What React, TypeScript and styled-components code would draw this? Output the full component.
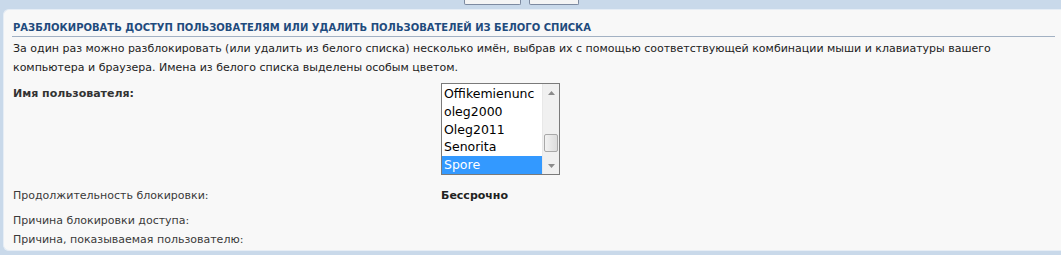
import React from "react";
import styled, { createGlobalStyle } from "styled-components";

const GlobalStyle = createGlobalStyle`
  html, body {
    margin: 0;
    padding: 0;
    background: #c9d9ea;
    overflow: hidden;
  }
  body {
    font-family: "DejaVu Sans", Verdana, sans-serif;
  }
`;

const Page = styled.div`
  width: 1061px;
  height: 255px;
  display: flex;
  flex-direction: column;
`;

const TopBar = styled.div`
  height: 9px;
  display: flex;
  justify-content: flex-start;
  align-items: flex-end;
  gap: 8px;
  padding-left: 464px;
  box-sizing: border-box;
`;

const TopButton = styled.div<{ w: number }>`
  width: ${(p) => p.w}px;
  height: 14px;
  margin-bottom: 4px;
  background: #f4f4f4;
  border: 1px solid #7d8aa0;
  border-top: none;
  border-radius: 0 0 2px 2px;
`;

const Panel = styled.div`
  margin-left: 3px;
  height: 242px;
  background: #f8f8f8;
  border-radius: 6px 0 0 6px;
  border: 1px solid #e6edf5;
  border-right: none;
  box-sizing: border-box;
  padding: 11px 6px 0 8px;
  display: flex;
  flex-direction: column;
`;

const Title = styled.h2`
  margin: 0;
  padding: 0 0 2px 1px;
  font-size: 10px;
  line-height: 13px;
  font-weight: bold;
  color: #1f4b7d;
  border-bottom: 1px solid #a2b1c3;
`;

const Description = styled.p`
  margin: 2px 0 0 1px;
  font-size: 11px;
  line-height: 19px;
  color: #222;
`;

const Row = styled.div<{ top: number }>`
  display: grid;
  grid-template-columns: 428px 1fr;
  margin-top: ${(p) => p.top}px;
  padding-left: 1px;
  font-size: 11px;
  line-height: 14px;
  color: #333;
`;

const Label = styled.div<{ strong?: boolean }>`
  font-weight: ${(p) => (p.strong ? "bold" : "normal")};
  color: ${(p) => (p.strong ? "#333" : "#3a3a3a")};
`;

const Value = styled.div`
  font-weight: bold;
  color: #222;
`;

const ListBox = styled.div`
  width: 119px;
  height: 92px;
  border: 1px solid #7a7a7a;
  background: #fff;
  display: flex;
  box-sizing: border-box;
  margin-top: -4px;
`;

const Options = styled.div`
  flex: 1;
  display: flex;
  flex-direction: column;
  padding-top: 1px;
`;

const Option = styled.div<{ selected?: boolean }>`
  height: 18px;
  line-height: 18px;
  padding-left: 2px;
  font-family: "DejaVu Sans", Tahoma, sans-serif;
  font-size: 12.5px;
  color: ${(p) => (p.selected ? "#fff" : "#000")};
  background: ${(p) => (p.selected ? "#3399ff" : "transparent")};
  white-space: nowrap;
  overflow: hidden;
`;

const ScrollBar = styled.div`
  width: 16px;
  background: #f0f0f0;
  border-left: 1px solid #e8e8e8;
  display: flex;
  flex-direction: column;
  align-items: center;
`;

const Arrow = styled.div`
  height: 17px;
  display: flex;
  align-items: center;
  justify-content: center;
`;

const Track = styled.div`
  flex: 1;
  width: 100%;
  display: flex;
  flex-direction: column;
  justify-content: flex-end;
  padding-bottom: 5px;
  box-sizing: border-box;
`;

const Thumb = styled.div`
  height: 16px;
  margin: 0 1px;
  border: 1px solid #a8a8a8;
  border-radius: 2px;
  background: linear-gradient(to right, #f2f2f2, #dcdcdc);
`;

const ArrowIcon = ({ up }: { up?: boolean }) => (
  <svg width="7" height="4" viewBox="0 0 7 4">
    <path d={up ? "M0 4 L3.5 0 L7 4 Z" : "M0 0 L3.5 4 L7 0 Z"} fill="#8a8a8a" />
  </svg>
);

const users = ["Offikemienunc", "oleg2000", "Oleg2011", "Senorita", "Spore"];

export default function App() {
  return (
    <Page>
      <GlobalStyle />
      <TopBar>
        <TopButton w={55} />
        <TopButton w={48} />
      </TopBar>
      <Panel>
        <Title>РАЗБЛОКИРОВАТЬ ДОСТУП ПОЛЬЗОВАТЕЛЯМ ИЛИ УДАЛИТЬ ПОЛЬЗОВАТЕЛЕЙ ИЗ БЕЛОГО СПИСКА</Title>
        <Description>
          За один раз можно разблокировать (или удалить из белого списка) несколько имён, выбрав их с помощью
          соответствующей комбинации мыши и клавиатуры вашего компьютера и браузера. Имена из белого списка
          выделены особым цветом.
        </Description>
        <Row top={10}>
          <Label strong>Имя пользователя:</Label>
          <ListBox>
            <Options>
              {users.map((u) => (
                <Option key={u} selected={u === "Spore"}>
                  {u}
                </Option>
              ))}
            </Options>
            <ScrollBar>
              <Arrow>
                <ArrowIcon up />
              </Arrow>
              <Track>
                <Thumb />
              </Track>
              <Arrow>
                <ArrowIcon />
              </Arrow>
            </ScrollBar>
          </ListBox>
        </Row>
        <Row top={14}>
          <Label>Продолжительность блокировки:</Label>
          <Value>Бессрочно</Value>
        </Row>
        <Row top={11}>
          <Label>Причина блокировки доступа:</Label>
        </Row>
        <Row top={5}>
          <Label>Причина, показываемая пользователю:</Label>
        </Row>
      </Panel>
    </Page>
  );
}
